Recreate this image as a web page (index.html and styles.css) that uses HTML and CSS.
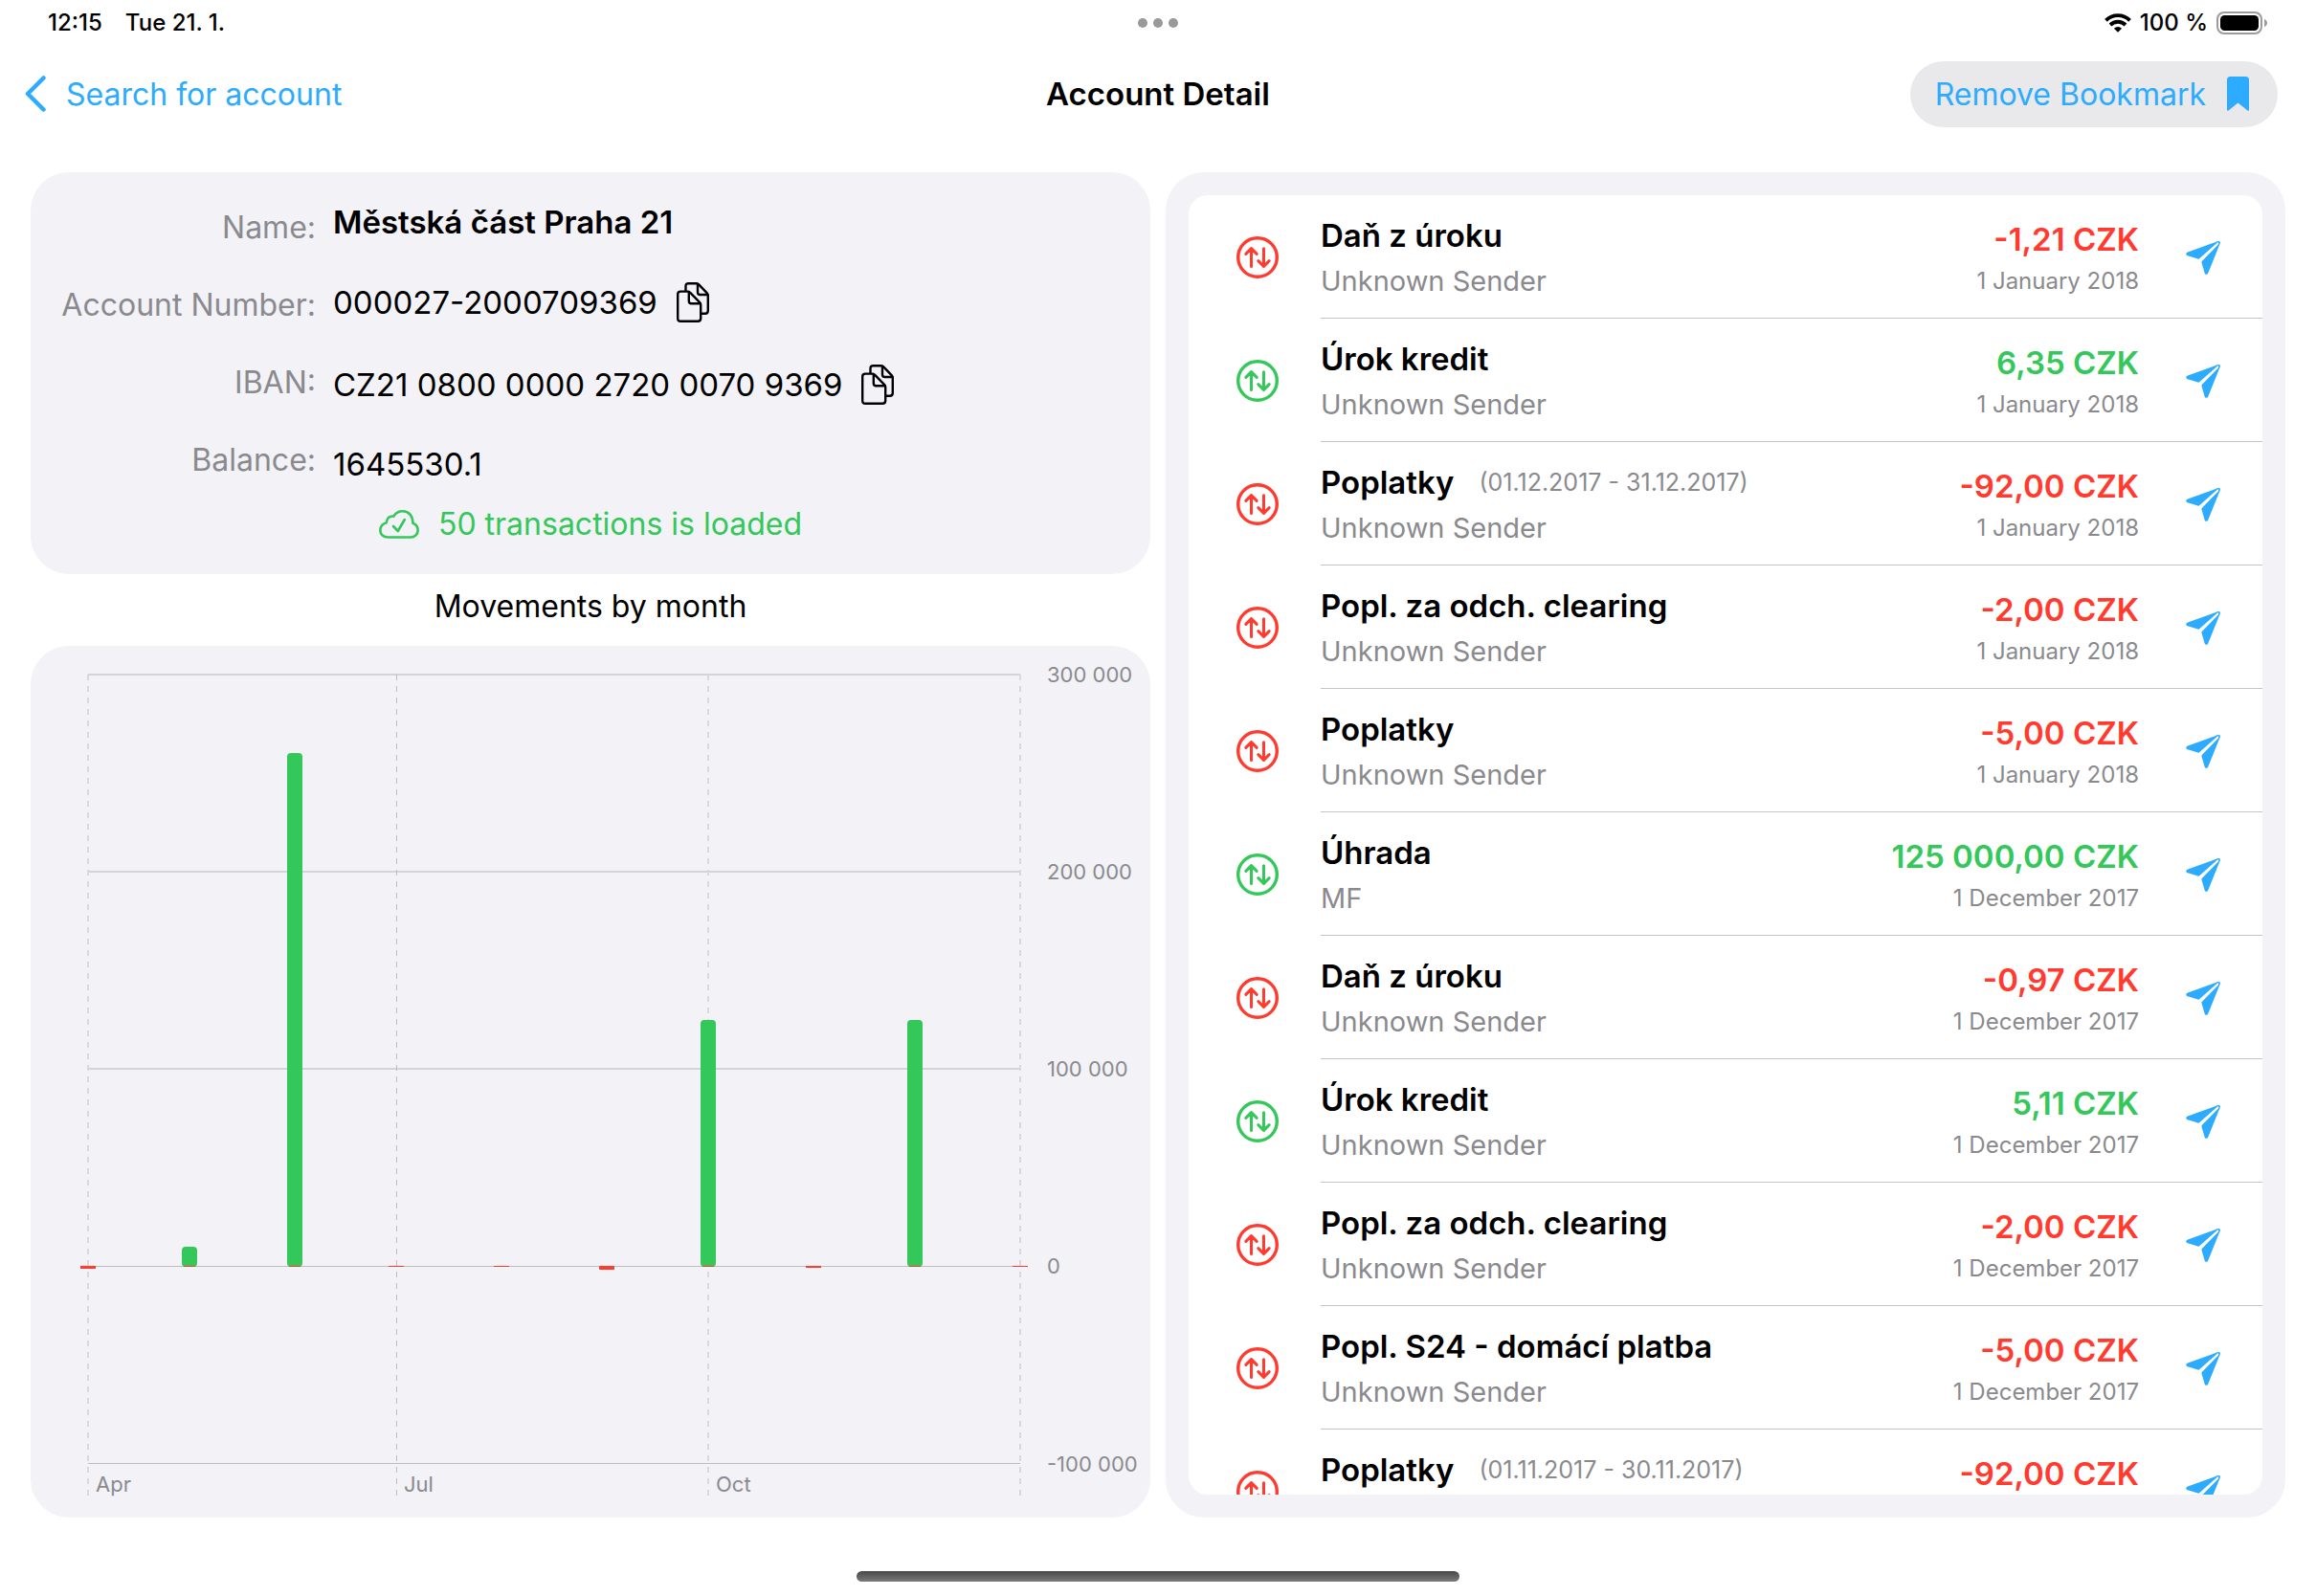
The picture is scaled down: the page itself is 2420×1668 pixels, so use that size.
FILE: index.html
```
<!DOCTYPE html>
<html lang="en">
<head>
<meta charset="utf-8">
<meta name="viewport" content="width=device-width, initial-scale=1">
<title>Account Detail</title>
<link rel="stylesheet" href="styles.css">
</head>
<body>
<svg class="sprite" aria-hidden="true">
  <symbol id="i-transfer" viewBox="0 0 44 44"><g fill="none" stroke="currentColor" stroke-linecap="round" stroke-linejoin="round"><circle cx="22" cy="22" r="20.3" stroke-width="3.4"/><path stroke-width="3" d="M15.500 31.500V12.600M9.800 18.400l5.700-5.800 5.700 5.800M28.500 12.800v18.600M22.800 25.600l5.700 5.800 5.700-5.800"/></g></symbol>
  <symbol id="i-send" viewBox="0 0 36 36"><path fill="currentColor" d="M32.600 1.400 2 12.600C-.3 13.500-.2 15.600 1.800 16.300L12.500 19.600Q13.600 19.900 14.400 19.100L32.800 2.700ZM34.900 3.400 17 21.700Q16.200 22.500 16.500 23.600L19.600 34.200C20.300 36.200 22.500 36.200 23.300 34.200L35.400 4.200Q36 2 34.900 1.600Z"/><path fill="currentColor" d="M31.500 1.800Q34 .4 35.300 1.200T35 4.800L34 5.500 34.300 2.500 32 2.600Z"/></symbol>
  <symbol id="i-copy" viewBox="0 0 34 42"><g fill="none" stroke="currentColor" stroke-width="2.400" stroke-linejoin="round" stroke-linecap="round"><path d="M9.500 8.500V4.200Q9.500 1.200 12.500 1.200H20.500Q22 1.200 23.200 2.400L31.600 11.200Q32.800 12.500 32.800 14V29.800Q32.800 32.800 29.800 32.800H26"/><path d="M22 1.800V10.500Q22 13 24.500 13H32.400"/><path d="M4.200 9.600H11.500Q13 9.600 14.200 10.800L24 20.800Q25.200 22 25.200 23.500V37.800Q25.200 40.800 22.200 40.800H4.200Q1.200 40.800 1.200 37.800V12.600Q1.200 9.600 4.200 9.600Z"/><path d="M12.800 10V19.500Q12.800 22.200 15.500 22.200H24.800"/></g></symbol>
</svg>

<header class="status">
  <div class="status-side"><span>12:15</span><span>Tue 21. 1.</span></div>
  <div class="dots"><i></i><i></i><i></i></div>
  <div class="status-side status-end">
    <svg class="wifi" viewBox="0 0 28 20" aria-hidden="true"><g fill="none" stroke="#000" stroke-width="3.900"><path d="M1.500 7.300a17.800 17.800 0 0 1 25 0"/><path d="M6 12a11.500 11.500 0 0 1 16 0"/></g><path d="M14 19.800 9.900 15.700a5.900 5.900 0 0 1 8.200 0z"/></svg>
    <span>100 %</span>
    <svg class="battery" viewBox="0 0 54 24" aria-hidden="true"><rect x="1" y="1" width="46" height="22" rx="7" fill="none" stroke="#9b9b9b" stroke-width="2"/><rect x="4" y="4" width="40" height="16" rx="4.500"/><path d="M50 8c4 1.500 4 6.500 0 8z" fill="#9b9b9b"/></svg>
  </div>
</header>

<nav class="nav">
  <a class="back" href="#"><svg viewBox="0 0 22 38" aria-hidden="true"><path d="M19.500 2.500 3 19l16.500 16.500" fill="none" stroke="currentColor" stroke-width="4.500" stroke-linecap="round" stroke-linejoin="round"/></svg>Search for account</a>
  <h1>Account Detail</h1>
  <div class="nav-end"><button class="bookmark" type="button">Remove Bookmark<svg viewBox="0 0 23 36" aria-hidden="true"><path fill="currentColor" d="M3.500 0h16Q23 0 23 3.500v31.200q0 1.800-1.500.8L11.500 27.500 1.500 35.500Q0 36.500 0 34.700V3.500Q0 0 3.500 0z"/></svg></button></div>
</nav>

<main class="content">
  <div class="left">
    <section class="card info">
      <div class="fields">
        <div class="labels"><span>Name:</span><span>Account Number:</span><span>IBAN:</span><span>Balance:</span></div>
        <div class="values">
          <strong>Městská část Praha 21</strong>
          <div class="copyable"><span>000027-2000709369</span><button type="button" aria-label="Copy account number"><svg><use href="#i-copy"/></svg></button></div>
          <div class="copyable"><span>CZ21 0800 0000 2720 0070 9369</span><button type="button" aria-label="Copy IBAN"><svg><use href="#i-copy"/></svg></button></div>
          <span>1645530.1</span>
        </div>
      </div>
      <p class="loaded"><svg viewBox="0 0 42 30" aria-hidden="true"><g fill="none" stroke="currentColor" stroke-width="2.600" stroke-linecap="round" stroke-linejoin="round"><path d="M9.500 28.500H33C37.500 28.500 40.700 25.200 40.700 21.300 40.700 17.600 38.500 15 35.400 13.800 35.400 6 31 1.300 24.800 1.300 20.500 1.300 17.300 3.300 15.400 6.600 11.500 5.800 8 8.500 7.800 13.200 4 14.300 1.300 17.200 1.300 21.200 1.300 25.400 4.700 28.500 9.500 28.500Z"/><path d="m15 17 4.800 5 7-12"/></g></svg>50 transactions is loaded</p>
    </section>
    <h2>Movements by month</h2>
    <section class="card chart">
      <svg viewBox="0 0 1170 911" role="img" aria-label="Movements by month">
        <g class="grid">
          <path d="M60 30H1034M60 236H1034M60 442H1034"/>
          <path class="fine" d="M60 648.500H1034M60 854.500H1034"/>
          <path class="dash" d="M60 30V888M708 30V888M1034 30V888"/>
          <path class="fine dashed" d="M382.500 30V888"/>
        </g>
        <g class="in">
          <rect x="158" y="628" width="16" height="21" rx="4"/>
          <rect x="268" y="112" width="16" height="537" rx="4"/>
          <rect x="700" y="391" width="16" height="258" rx="4"/>
          <rect x="916" y="391" width="16" height="258" rx="4"/>
        </g>
        <g class="out">
          <rect x="52" y="648" width="16" height="3"/>
          <rect x="160" y="648" width="12" height="1"/>
          <rect x="270" y="648" width="12" height="1"/>
          <rect x="374" y="648" width="16" height="1"/>
          <rect x="484" y="648" width="16" height="1"/>
          <rect x="594" y="648" width="16" height="4" rx="1"/>
          <rect x="702" y="648" width="12" height="1"/>
          <rect x="810" y="648" width="16" height="2"/>
          <rect x="918" y="648" width="12" height="1"/>
          <rect x="1026" y="648" width="16" height="1"/>
        </g>
        <g class="axis">
          <text x="1062" y="38">300 000</text>
          <text x="1062" y="244">200 000</text>
          <text x="1062" y="450">100 000</text>
          <text x="1062" y="656">0</text>
          <text x="1062" y="863">-100 000</text>
          <text x="68" y="884">Apr</text>
          <text x="390" y="884">Jul</text>
          <text x="716" y="884">Oct</text>
        </g>
      </svg>
    </section>
  </div>

  <section class="card right">
    <ul class="list" id="list"></ul>
  </section>
</main>
<div class="home"></div>
<script src="app.js"></script>
</body>
</html>
```
FILE: styles.css
```
:root {
  --blue: #2cabff;
  --red: #ff3b30;
  --green: #34c759;
  --gray: #8a8a8e;
  --card: #f2f2f7;
}
* { box-sizing: border-box; margin: 0; padding: 0; }
body {
  display: flex;
  flex-direction: column;
  height: 100vh;
  background: #fff;
  color: #000;
  font-family: Inter, "Liberation Sans", sans-serif;
  font-size: 32px;
  line-height: 41px;
}
button { border: 0; background: none; font: inherit; color: inherit; cursor: pointer; }
svg { display: block; flex: none; }
.sprite { position: absolute; width: 0; height: 0; }

.status {
  display: grid;
  grid-template-columns: 1fr auto 1fr;
  align-items: center;
  height: 48px;
  padding: 0 50px;
  font-size: 24px;
  font-weight: 500;
  line-height: 32px;
}
.status-side { display: flex; align-items: center; gap: 24px; }
.status-end { justify-content: flex-end; gap: 9px; }
.wifi { width: 28px; height: 20px; }
.battery { width: 54px; height: 24px; }
.dots { display: flex; gap: 6px; }
.dots i { width: 10px; height: 10px; border-radius: 50%; background: #999; }

.nav {
  display: grid;
  grid-template-columns: 1fr auto 1fr;
  align-items: center;
  height: 100px;
  padding: 0 26px;
}
.nav h1 { font-size: 33px; font-weight: 600; line-height: 41px; }
.back { display: flex; align-items: center; gap: 21px; color: var(--blue); text-decoration: none; }
.back svg { width: 22px; height: 38px; }
.nav-end { display: flex; justify-content: flex-end; padding-right: 14px; }
.bookmark {
  display: flex;
  align-items: center;
  gap: 22px;
  height: 69px;
  padding: 0 30px 0 26px;
  border-radius: 35px;
  background: #e9e9eb;
  color: var(--blue);
}
.bookmark svg { width: 23px; height: 36px; }

.content {
  display: grid;
  grid-template-columns: minmax(0, 1fr) minmax(0, 1fr);
  grid-template-rows: minmax(0, 1fr);
  gap: 16px;
  flex: 1;
  min-height: 0;
  padding: 32px 32px 0;
}
.card { background: var(--card); border-radius: 40px; }
.left { display: flex; flex-direction: column; min-height: 0; }
.info { padding: 32px; }
.fields { display: flex; align-items: center; gap: 18px; }
.labels, .values { display: flex; flex-direction: column; gap: 40px; }
.labels { min-width: 266px; text-align: right; color: var(--gray); }
.values { font-size: 33px; }
.values strong { font-weight: 600; }
.copyable { display: flex; align-items: center; gap: 20px; height: 46px; }
.copyable svg { width: 34px; height: 42px; }
.loaded {
  display: flex;
  align-items: center;
  justify-content: center;
  gap: 20px;
  margin-top: 21px;
  color: var(--green);
}
.loaded svg { width: 42px; height: 30px; }
h2 { padding: 13px 0 21px; font-size: 32px; font-weight: 400; text-align: center; }

.chart { flex: 1; min-height: 0; }
.chart svg { width: 100%; height: 100%; }
.grid path { fill: none; stroke: #d3d3d8; stroke-width: 2; }
.grid .dash { stroke: #d8d8dd; stroke-dasharray: 6 6; }
.grid .fine { stroke: #bcbcc1; stroke-width: 1; }
.grid .dashed { stroke-dasharray: 6 6; }
.in { fill: var(--green); }
.out { fill: var(--red); }
.axis { fill: var(--gray); font-size: 22px; }

.right { padding: 24px; min-height: 0; }
.list {
  height: 100%;
  overflow: hidden;
  border-radius: 20px;
  background: #fff;
  list-style: none;
}
.row { display: flex; align-items: center; gap: 44px; height: 129px; padding-left: 50px; }
.kind { width: 44px; height: 44px; }
.body {
  display: flex;
  align-items: center;
  flex: 1;
  height: 129px;
  padding: 2px 44px 0 0;
  border-bottom: 1px solid #c4c4c7;
}
.text { display: flex; flex-direction: column; flex: 1; gap: 9px; }
.title { display: flex; align-items: center; gap: 26px; font-size: 33px; font-weight: 600; }
.note { font-size: 25px; font-weight: 400; line-height: 29px; color: var(--gray); }
.sender { min-height: 36px; font-size: 29px; line-height: 36px; color: var(--gray); }
.sum { display: flex; flex-direction: column; gap: 8px; margin-right: 49px; text-align: right; }
.amount { font-size: 33px; font-weight: 600; }
.date { min-height: 29px; font-size: 24px; line-height: 29px; color: var(--gray); }
.debit { color: var(--red); }
.credit { color: var(--green); }
.send { color: var(--blue); }
.send svg { width: 36px; height: 36px; }

.home {
  width: 26%;
  height: 11px;
  margin: 56px auto 15px;
  flex: none;
  border-radius: 6px;
  background: linear-gradient(#484848, #7a7a7a);
}
```
FILE: app.js
```
const rows = [
  ["Daň z úroku", "", "Unknown Sender", "-1,21", "1 January 2018"],
  ["Úrok kredit", "", "Unknown Sender", "6,35", "1 January 2018"],
  ["Poplatky", "(01.12.2017 - 31.12.2017)", "Unknown Sender", "-92,00", "1 January 2018"],
  ["Popl. za odch. clearing", "", "Unknown Sender", "-2,00", "1 January 2018"],
  ["Poplatky", "", "Unknown Sender", "-5,00", "1 January 2018"],
  ["Úhrada", "", "MF", "125 000,00", "1 December 2017"],
  ["Daň z úroku", "", "Unknown Sender", "-0,97", "1 December 2017"],
  ["Úrok kredit", "", "Unknown Sender", "5,11", "1 December 2017"],
  ["Popl. za odch. clearing", "", "Unknown Sender", "-2,00", "1 December 2017"],
  ["Popl. S24 - domácí platba", "", "Unknown Sender", "-5,00", "1 December 2017"],
  ["Poplatky", "(01.11.2017 - 30.11.2017)", "", "-92,00", ""]
];
document.getElementById("list").innerHTML = rows.map(([title, note, sender, amount, date]) => {
  const kind = amount.startsWith("-") ? "debit" : "credit";
  return `<li class="row">
    <svg class="kind ${kind}" aria-hidden="true"><use href="#i-transfer"/></svg>
    <div class="body">
      <div class="text">
        <div class="title"><span>${title}</span>${note ? `<span class="note">${note}</span>` : ""}</div>
        <div class="sender">${sender}</div>
      </div>
      <div class="sum"><div class="amount ${kind}">${amount} CZK</div><div class="date">${date}</div></div>
      <button class="send" type="button" aria-label="Send payment"><svg><use href="#i-send"/></svg></button>
    </div>
  </li>`;
}).join("");
```
